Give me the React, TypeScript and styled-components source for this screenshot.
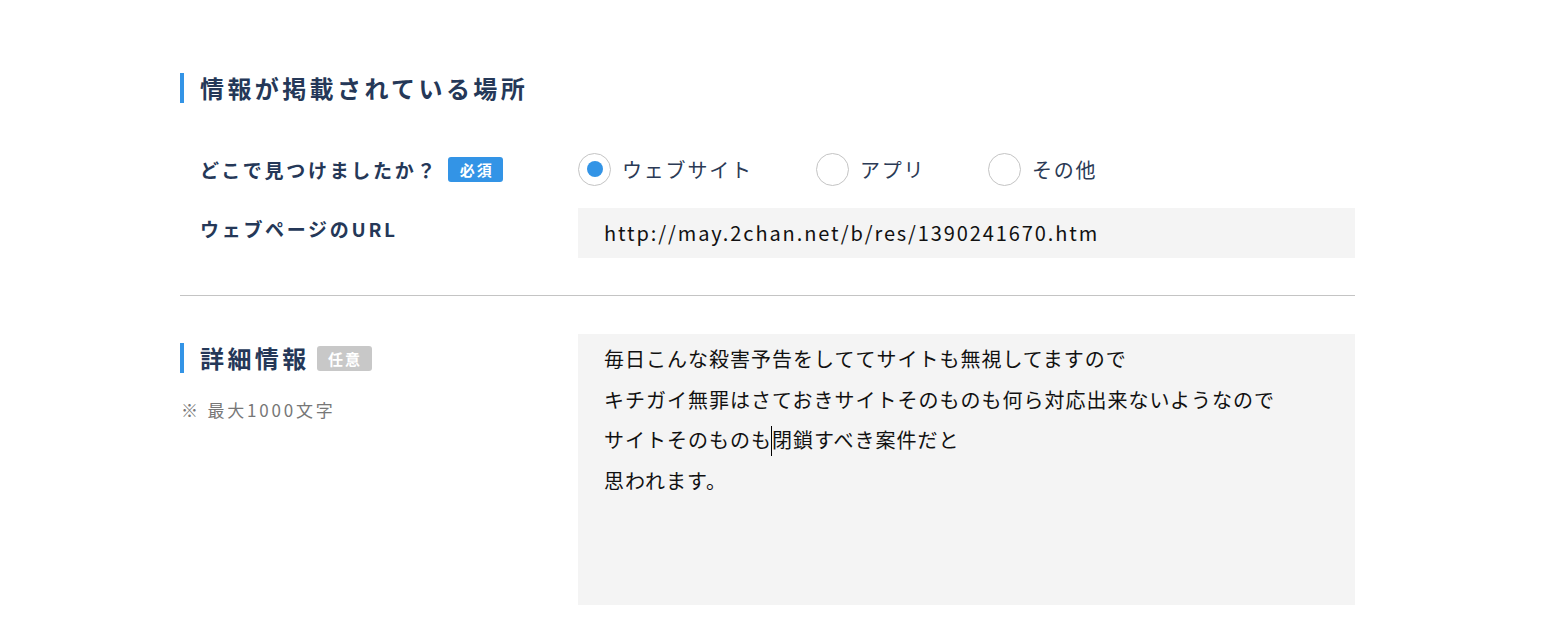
import React from "react";
import styled, { createGlobalStyle } from "styled-components";

const Global = createGlobalStyle`
  html, body { margin: 0; padding: 0; background: #fff; }
  body { font-family: "Noto Sans CJK JP", "Noto Sans", sans-serif; }
  * { box-sizing: border-box; }
`;

const Page = styled.div`
  width: 1548px;
  height: 627px;
  padding-left: 180px;
  padding-top: 73px;
  overflow: hidden;
`;

const Container = styled.div`
  width: 1175px;
`;

const Heading = styled.h2`
  margin: 0;
  display: flex;
  align-items: center;
  height: 30px;
  border-left: 4px solid #3394e6;
  padding-left: 16px;
  font-size: 24px;
  font-weight: 700;
  letter-spacing: 3.4px;
  color: #253858;
  line-height: 30px;
`;

const Row = styled.div<{ $mt: number; $align?: string }>`
  display: grid;
  grid-template-columns: 398px 777px;
  margin-top: ${(p) => p.$mt}px;
  align-items: ${(p) => p.$align || "center"};
`;

const Label = styled.div<{ $h?: number }>`
  display: flex;
  align-items: center;
  padding-left: 20px;
  height: ${(p) => p.$h || 34}px;
  font-size: 19px;
  font-weight: 700;
  letter-spacing: 2.7px;
  color: #253858;
`;

const Badge = styled.span<{ $tone: "req" | "opt" }>`
  display: inline-flex;
  align-items: center;
  justify-content: center;
  width: 55px;
  height: 25px;
  border-radius: 3px;
  background: ${(p) => (p.$tone === "req" ? "#3394e6" : "#c8c8c8")};
  color: #fff;
  font-size: 15px;
  font-weight: 700;
  letter-spacing: 2px;
  text-indent: 2px;
  line-height: 25px;
  margin-left: ${(p) => (p.$tone === "req" ? 10 : 7)}px;
`;

const Radios = styled.div`
  display: flex;
  align-items: center;
  height: 34px;
`;

const RadioItem = styled.label<{ $w: number }>`
  display: flex;
  align-items: center;
  width: ${(p) => p.$w}px;
  font-size: 20px;
  letter-spacing: 1.8px;
  color: #2b3a55;
  cursor: pointer;
`;

const Circle = styled.span<{ $on?: boolean }>`
  position: relative;
  width: 33px;
  height: 33px;
  border-radius: 50%;
  border: 1px solid #c4c4c4;
  background: #fff;
  margin-right: 11px;
  flex: none;
  &::after {
    content: "";
    display: ${(p) => (p.$on ? "block" : "none")};
    position: absolute;
    left: 7.5px;
    top: 7.5px;
    width: 16px;
    height: 16px;
    border-radius: 50%;
    background: #3394e6;
  }
`;

const Field = styled.div<{ $h: number }>`
  height: ${(p) => p.$h}px;
  background: #f4f4f4;
  padding-left: 26px;
  font-size: 20px;
  letter-spacing: 1px;
  color: #111;
`;

const UrlField = styled(Field)`
  display: flex;
  align-items: center;
  letter-spacing: 1.9px;
  padding-bottom: 2px;
`;

const TextField = styled(Field)`
  padding-top: 5px;
  line-height: 40.5px;
  white-space: pre;
`;

const Caret = styled.span`
  position: relative;
  display: inline-block;
  width: 0;
  height: 0;
  &::after {
    content: "";
    position: absolute;
    left: -1px;
    top: -22px;
    width: 1px;
    height: 30px;
    background: #000;
  }
`;

const Divider = styled.hr`
  margin: 37px 0 0;
  border: 0;
  border-top: 1px solid #c4c4c4;
  height: 0;
`;

const Side = styled.div`
  padding-top: 9px;
`;

const Note = styled.div`
  margin-top: 25px;
  padding-left: 1px;
  font-size: 17px;
  line-height: 24px;
  letter-spacing: 2.8px;
  color: #777;
`;

export default function App() {
  return (
    <>
      <Global />
      <Page>
        <Container>
          <Heading>情報が掲載されている場所</Heading>
          <Row $mt={49}>
            <Label>
              どこで見つけましたか？<Badge $tone="req">必須</Badge>
            </Label>
            <Radios>
              <RadioItem $w={238}>
                <Circle $on />
                ウェブサイト
              </RadioItem>
              <RadioItem $w={172}>
                <Circle />
                アプリ
              </RadioItem>
              <RadioItem $w={160}>
                <Circle />
                その他
              </RadioItem>
            </Radios>
          </Row>
          <Row $mt={22} $align="start">
            <Label $h={40}>ウェブページのURL</Label>
            <UrlField $h={50}>http://may.2chan.net/b/res/1390241670.htm</UrlField>
          </Row>
          <Divider />
          <Row $mt={38} $align="start">
            <Side>
              <Heading>
                詳細情報<Badge $tone="opt">任意</Badge>
              </Heading>
              <Note>※ 最大1000文字</Note>
            </Side>
            <TextField $h={271}>
              {"毎日こんな殺害予告をしててサイトも無視してますので\nキチガイ無罪はさておきサイトそのものも何ら対応出来ないようなので\nサイトそのものも"}
              <Caret />
              {"閉鎖すべき案件だと\n思われます。"}
            </TextField>
          </Row>
        </Container>
      </Page>
    </>
  );
}
